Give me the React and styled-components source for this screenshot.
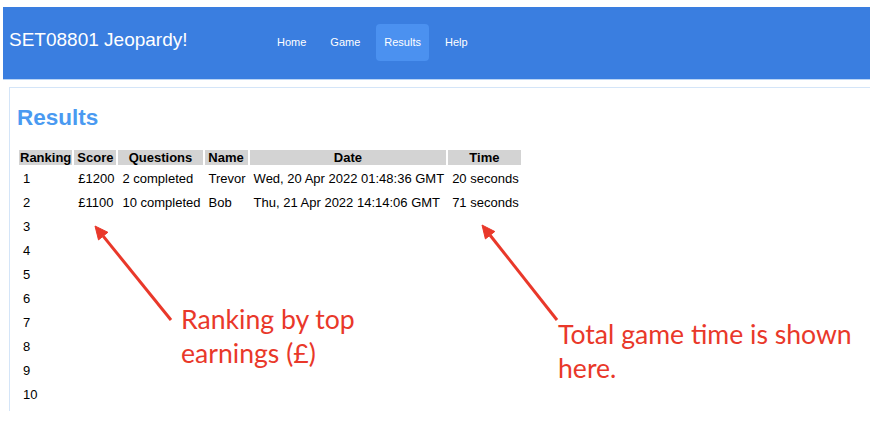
import React from "react";
import styled, { createGlobalStyle } from "styled-components";

const Global = createGlobalStyle`
  html, body { margin: 0; padding: 0; background: #ffffff; }
  body { overflow: hidden; font-family: "Liberation Sans", Arial, sans-serif; }
  #root { position: relative; width: 870px; height: 421px; }
`;

const Header = styled.header`
  margin: 7px 0 0 3px;
  height: 73px;
  box-sizing: border-box;
  background: #3a7ee0;
  border-bottom: 1px solid #b9d4f5;
  display: grid;
  grid-template-columns: 260px auto;
  justify-content: start;
  align-items: baseline;
  padding: 17px 0 0 6px;
  color: #ffffff;
`;

const Brand = styled.div`
  font-size: 19px;
  line-height: 23px;
  white-space: nowrap;
`;

const Nav = styled.nav`
  display: flex;
  align-items: baseline;
  gap: 8px;
`;

const NavLink = styled.a`
  display: block;
  padding: 12px 8px;
  font-size: 11px;
  line-height: 13px;
  color: #ffffff;
  text-decoration: none;
  border-radius: 4px;
  background: ${(p) => (p.$active ? "#4b91f0" : "transparent")};
`;

const Card = styled.main`
  margin: 7px 0 0 9px;
  border-top: 1px solid #d4e5f8;
  border-left: 1px solid #d4e5f8;
  padding: 17px 0 4px 7px;
`;

const Title = styled.h2`
  margin: 0 0 18px 0;
  font-size: 22.5px;
  line-height: 25px;
  font-weight: bold;
  color: #4a9af1;
`;

const Table = styled.table`
  border-collapse: separate;
  border-spacing: 2px;
  font-size: 13px;
  color: #000000;
`;

const Th = styled.th`
  background: #d3d3d3;
  padding: 0 1px;
  height: 15px;
  line-height: 15px;
  font-weight: bold;
  text-align: center;
  white-space: nowrap;
`;

const Td = styled.td`
  padding: 0 2px 0 4px;
  height: 22px;
  line-height: 15px;
  white-space: nowrap;
`;

const Overlay = styled.svg`
  position: absolute;
  left: 0;
  top: 0;
  pointer-events: none;
`;

const Callout = styled.div`
  position: absolute;
  left: ${(p) => p.$x}px;
  top: ${(p) => p.$y}px;
  font-family: Lato, "Open Sans", sans-serif;
  font-size: 26.6px;
  line-height: 34px;
  color: #e9382a;
  white-space: nowrap;
`;

const results = [
  { score: "£1200", q: "2 completed", name: "Trevor", date: "Wed, 20 Apr 2022 01:48:36 GMT", time: "20 seconds" },
  { score: "£1100", q: "10 completed", name: "Bob", date: "Thu, 21 Apr 2022 14:14:06 GMT", time: "71 seconds" },
];

export default function App() {
  const rows = Array.from({ length: 10 }, (_, i) => results[i] || null);
  return (
    <>
      <Global />
      <Header>
        <Brand>SET08801 Jeopardy!</Brand>
        <Nav>
          <NavLink>Home</NavLink>
          <NavLink>Game</NavLink>
          <NavLink $active>Results</NavLink>
          <NavLink>Help</NavLink>
        </Nav>
      </Header>
      <Card>
        <Title>Results</Title>
        <Table>
          <thead>
            <tr>
              <Th>Ranking</Th>
              <Th>Score</Th>
              <Th>Questions</Th>
              <Th>Name</Th>
              <Th>Date</Th>
              <Th>Time</Th>
            </tr>
          </thead>
          <tbody>
            {rows.map((r, i) => (
              <tr key={i}>
                <Td>{i + 1}</Td>
                <Td>{r ? r.score : ""}</Td>
                <Td>{r ? r.q : ""}</Td>
                <Td>{r ? r.name : ""}</Td>
                <Td>{r ? r.date : ""}</Td>
                <Td>{r ? r.time : ""}</Td>
              </tr>
            ))}
          </tbody>
        </Table>
      </Card>
      <Overlay width="870" height="421" viewBox="0 0 870 421">
        <g fill="#e9382a" stroke="#e9382a">
          <line x1="171" y1="313" x2="103.2" y2="229.1" strokeWidth="3" />
          <polygon points="95,219 107.9,225.3 98.5,232.9" strokeWidth="1" />
          <line x1="557" y1="313" x2="490.1" y2="228.2" strokeWidth="3" />
          <polygon points="482,218 494.8,224.5 485.4,231.9" strokeWidth="1" />
        </g>
      </Overlay>
      <Callout $x={181} $y={295}>
        Ranking by top
        <br />
        earnings (£)
      </Callout>
      <Callout $x={558} $y={310}>
        Total game time is shown
        <br />
        here.
      </Callout>
    </>
  );
}
